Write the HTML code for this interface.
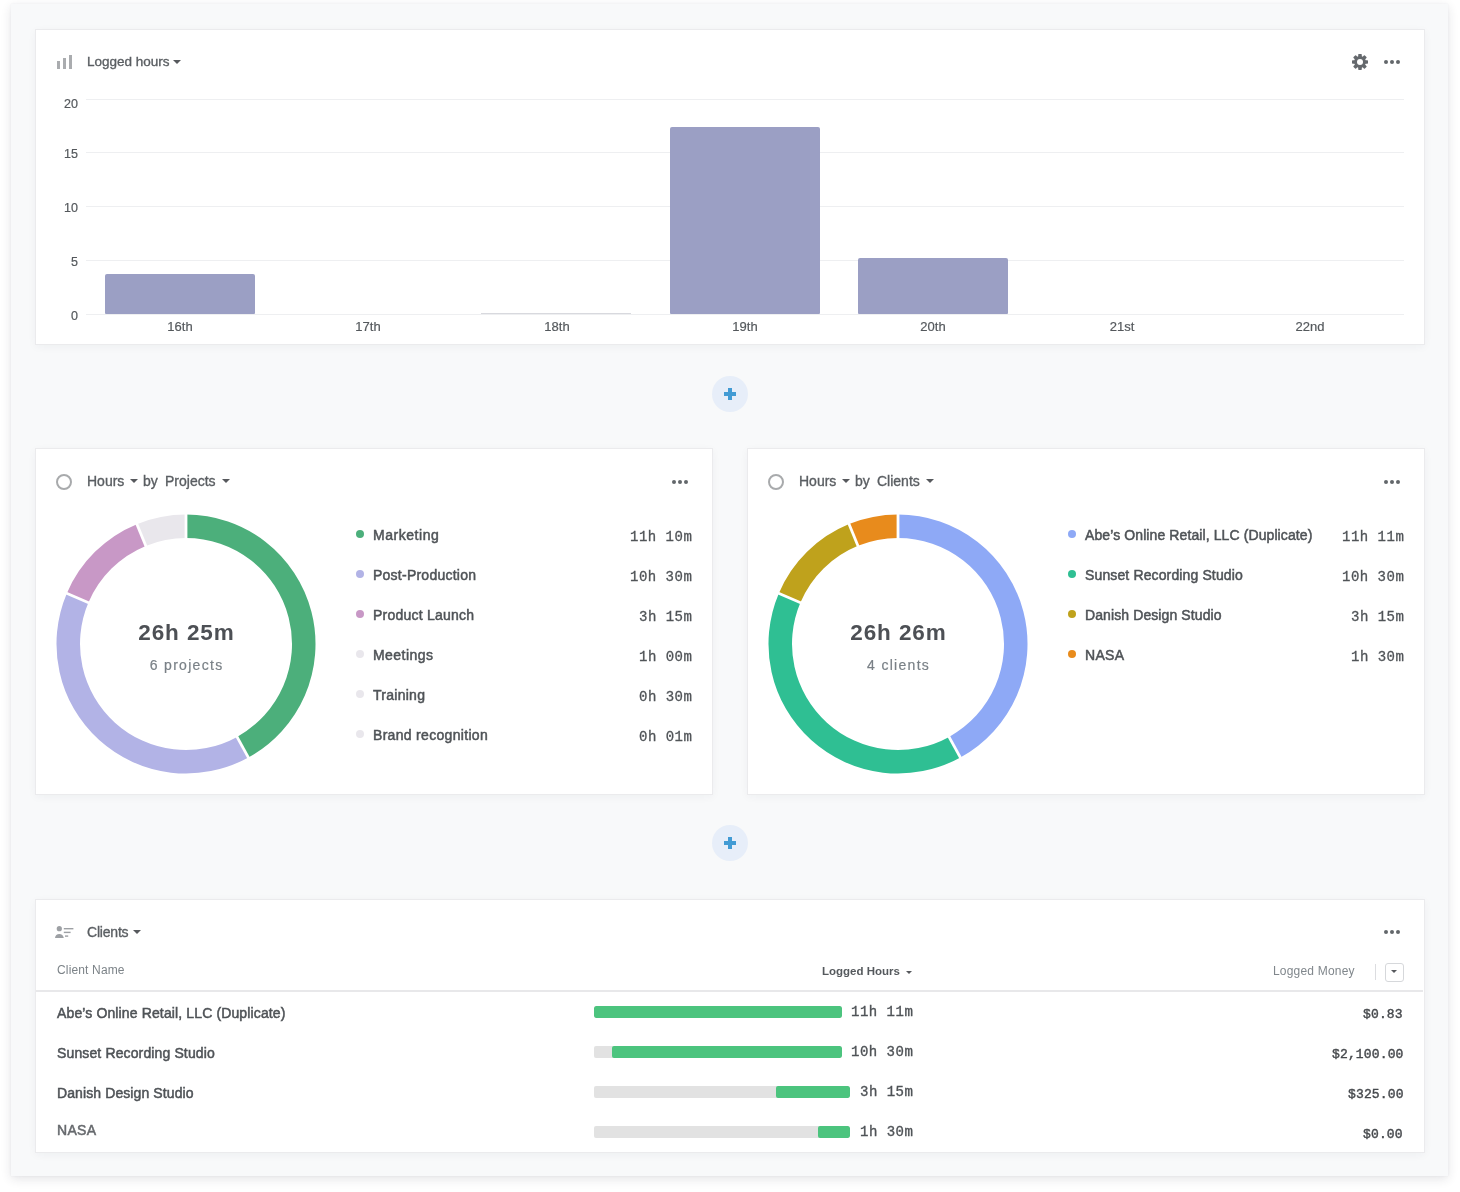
<!DOCTYPE html>
<html><head><meta charset="utf-8"><style>
*{box-sizing:border-box;margin:0;padding:0}
html,body{width:1460px;height:1192px;overflow:hidden;background:#fff;-webkit-font-smoothing:antialiased;font-family:"Liberation Sans",sans-serif;color:#55595d}
.outer{position:absolute;left:11px;top:4px;width:1437px;height:1172px;background:#f8f9fa;box-shadow:0 3px 10px rgba(40,40,60,0.12),0 0 2px rgba(40,44,60,0.06)}
.panel{position:absolute;background:#fff;border:1px solid #ebebed;box-shadow:0 2px 8px rgba(30,40,60,0.045)}
.abs{position:absolute}
.title,.lg,.val,.tname,.tval,.money,.th,.xlab,.ylab,.center1,.center2{will-change:transform}
.title{position:absolute;font-size:14px;line-height:16px;color:#5a5e62;white-space:nowrap;-webkit-text-stroke:0.35px #5a5e62}
.caret{position:absolute;width:0;height:0;border-left:4px solid transparent;border-right:4px solid transparent;border-top:4.5px solid #56595d}
.dots{position:absolute;width:16px;height:4px}
.dots i{position:absolute;top:0;width:4.2px;height:4.2px;border-radius:50%;background:#63676b}
.dots i:nth-child(1){left:0} .dots i:nth-child(2){left:6px} .dots i:nth-child(3){left:12px}
.grid{position:absolute;left:86px;width:1318px;height:1px;background:#eeeff1}
.ylab{position:absolute;left:40px;width:38px;text-align:right;font-size:12.5px;line-height:16px;color:#55595d;-webkit-text-stroke:0.2px #55595d}
.bar{position:absolute;background:#9b9fc4;border-radius:2px 2px 1px 1px}
.xlab{position:absolute;top:319px;width:200px;text-align:center;font-size:13px;line-height:16px;color:#55595d;-webkit-text-stroke:0.2px #55595d}
.xlab{width:200px;margin-left:0}
.dot{position:absolute;width:8px;height:8px;border-radius:50%}
.lg{position:absolute;font-size:14px;line-height:18px;color:#4f5357;white-space:nowrap;letter-spacing:0.3px;-webkit-text-stroke:0.5px #4f5357}
.val{position:absolute;font-family:"Liberation Mono",monospace;font-size:14px;line-height:18px;letter-spacing:0.5px;margin-right:0px;color:#505458;white-space:pre;-webkit-text-stroke:0.3px #505458}
.center1{position:absolute;width:200px;text-align:center;font-weight:bold;font-size:22.5px;line-height:26px;color:#4d5055;letter-spacing:0.9px;text-indent:0.9px}
.center2{position:absolute;width:200px;text-align:center;font-size:14px;line-height:18px;color:#7a8187;-webkit-text-stroke:0.2px #7a8187;letter-spacing:1.3px;text-indent:1.3px}
.plus{position:absolute;width:36px;height:36px;border-radius:50%;background:#e7eef9}
.plus:before{content:"";position:absolute;left:12px;top:16.25px;width:12px;height:3.5px;background:#429bd4}
.plus:after{content:"";position:absolute;left:16.25px;top:12px;width:3.5px;height:12px;background:#429bd4}
.th{position:absolute;top:964px;font-size:12px;line-height:14px;color:#7b8085;white-space:nowrap}
.tname{position:absolute;left:57px;font-size:14px;line-height:18px;color:#4f5357;white-space:nowrap;letter-spacing:0.15px;-webkit-text-stroke:0.5px #4f5357}
.tbar{position:absolute;left:594px;height:12px;background:#e2e2e2;border-radius:2px;overflow:hidden}
.tfill{position:absolute;right:0;top:0;height:12px;background:#4cc47e;border-radius:2px}
.tval{position:absolute;right:547px;font-family:"Liberation Mono",monospace;font-size:14px;line-height:18px;letter-spacing:0.5px;color:#4f5357;white-space:pre;-webkit-text-stroke:0.35px #4f5357}
.money{position:absolute;right:56.8px;font-family:"Liberation Mono",monospace;font-size:13px;line-height:16px;color:#45484c;white-space:pre;letter-spacing:0.15px;-webkit-text-stroke:0.4px #45484c}
</style></head><body>
<div class="outer"></div>

<!-- Panel 1: bar chart -->
<div class="panel" style="left:35px;top:29px;width:1390px;height:316px"></div>
<div class="abs" style="left:57px;top:61px;width:2.5px;height:7.5px;background:#aaacaf"></div>
<div class="abs" style="left:63px;top:58px;width:2.5px;height:10.5px;background:#aaacaf"></div>
<div class="abs" style="left:69px;top:55px;width:2.5px;height:13.5px;background:#aaacaf"></div>
<div class="title" style="left:87px;top:54px;font-size:13.5px">Logged hours</div>
<div class="caret" style="left:173px;top:60px"></div>
<svg class="abs" style="left:1350px;top:52px" width="20" height="20" viewBox="0 0 20 20">
<g fill="#65696d" transform="translate(10 10)">
<circle r="5.9"/>
<rect x="-1.8" y="-8" width="3.6" height="16" rx="0.7"/>
<rect x="-1.8" y="-8" width="3.6" height="16" rx="0.7" transform="rotate(45)"/>
<rect x="-1.8" y="-8" width="3.6" height="16" rx="0.7" transform="rotate(90)"/>
<rect x="-1.8" y="-8" width="3.6" height="16" rx="0.7" transform="rotate(135)"/>
</g><circle cx="10" cy="10" r="3" fill="#fff"/></svg>
<div class="dots" style="left:1383.8px;top:59.9px"><i></i><i></i><i></i></div>
<div class="grid" style="top:99px"></div><div class="grid" style="top:152px"></div><div class="grid" style="top:206px"></div><div class="grid" style="top:260px"></div><div class="grid" style="top:314px"></div><div class="ylab" style="top:95.5px">20</div><div class="ylab" style="top:146px">15</div><div class="ylab" style="top:199.7px">10</div><div class="ylab" style="top:253.60000000000002px">5</div><div class="ylab" style="top:307.5px">0</div><div class="bar" style="left:105px;top:273.9px;width:150px;height:40.1px"></div><div class="xlab" style="left:80px">16th</div><div class="xlab" style="left:268.3px">17th</div><div class="xlab" style="left:456.7px">18th</div><div class="bar" style="left:670px;top:126.8px;width:150px;height:187.2px"></div><div class="xlab" style="left:645px">19th</div><div class="bar" style="left:858.3px;top:257.5px;width:150px;height:56.5px"></div><div class="xlab" style="left:833.3px">20th</div><div class="xlab" style="left:1021.7px">21st</div><div class="xlab" style="left:1210px">22nd</div>
<div class="abs" style="left:481px;top:312.5px;width:150px;height:1px;background:#d8d9de"></div>

<div class="plus" style="left:712px;top:376px"></div>

<!-- Panel 2: projects -->
<div class="panel" style="left:35px;top:448px;width:678px;height:347px"></div>
<div class="abs" style="left:56px;top:473.8px;width:16px;height:16px;border:2px solid #a8aaac;border-radius:50%"></div>
<div class="title" style="left:87px;top:473px">Hours</div><div class="caret" style="left:130px;top:479px"></div>
<div class="title" style="left:143px;top:473px">by</div>
<div class="title" style="left:165px;top:473px">Projects</div><div class="caret" style="left:222px;top:479px"></div>
<div class="dots" style="left:671.9px;top:479.7px"><i></i><i></i><i></i></div>
<svg class="abs" style="left:56.4px;top:513.5px" width="260" height="260"><path d="M130.00 0.50A129.5 129.5 0 0 1 192.39 243.48L181.07 222.89A106 106 0 0 0 130.00 24.00Z" fill="#4caf7b"/>
<path d="M192.39 243.48A129.5 129.5 0 0 1 10.79 79.40L32.43 88.58A106 106 0 0 0 181.07 222.89Z" fill="#b2b3e6"/>
<path d="M10.79 79.40A129.5 129.5 0 0 1 80.86 10.19L89.78 31.93A106 106 0 0 0 32.43 88.58Z" fill="#c898c6"/>
<path d="M80.86 10.19A129.5 129.5 0 0 1 130.00 0.50L130.00 24.00A106 106 0 0 0 89.78 31.93Z" fill="#e9e7ec"/>
<line x1="130.00" y1="-1.00" x2="130.00" y2="25.50" stroke="#fff" stroke-width="2.8"/>
<line x1="193.11" y1="244.80" x2="180.34" y2="221.57" stroke="#fff" stroke-width="2.8"/>
<line x1="9.41" y1="78.81" x2="33.81" y2="89.17" stroke="#fff" stroke-width="2.8"/>
<line x1="80.29" y1="8.80" x2="90.35" y2="33.32" stroke="#fff" stroke-width="2.8"/></svg>
<div class="center1" style="left:86.4px;top:620px">26h 25m</div>
<div class="center2" style="left:86.4px;top:656px">6 projects</div>
<div class="dot" style="left:356px;top:530px;background:#4caf7b"></div>
<div class="lg" style="left:373px;top:526px;letter-spacing:0.54px">Marketing</div>
<div class="val" style="right:768px;top:527.5px">11h 10m</div>
<div class="dot" style="left:356px;top:570px;background:#b2b3e6"></div>
<div class="lg" style="left:373px;top:566px;letter-spacing:0.24px">Post-Production</div>
<div class="val" style="right:768px;top:567.5px">10h 30m</div>
<div class="dot" style="left:356px;top:610px;background:#c898c6"></div>
<div class="lg" style="left:373px;top:606px;letter-spacing:0.22px">Product Launch</div>
<div class="val" style="right:768px;top:607.5px">3h 15m</div>
<div class="dot" style="left:356px;top:650px;background:#e9e7ec"></div>
<div class="lg" style="left:373px;top:646px;letter-spacing:0.46px">Meetings</div>
<div class="val" style="right:768px;top:647.5px">1h 00m</div>
<div class="dot" style="left:356px;top:690px;background:#e9e7ec"></div>
<div class="lg" style="left:373px;top:686px;letter-spacing:0.27px">Training</div>
<div class="val" style="right:768px;top:687.5px">0h 30m</div>
<div class="dot" style="left:356px;top:730px;background:#e9e7ec"></div>
<div class="lg" style="left:373px;top:726px;letter-spacing:0.31px">Brand recognition</div>
<div class="val" style="right:768px;top:727.5px">0h 01m</div>

<!-- Panel 3: clients donut -->
<div class="panel" style="left:747px;top:448px;width:678px;height:347px"></div>
<div class="abs" style="left:768px;top:473.8px;width:16px;height:16px;border:2px solid #a8aaac;border-radius:50%"></div>
<div class="title" style="left:799px;top:473px">Hours</div><div class="caret" style="left:842px;top:479px"></div>
<div class="title" style="left:855px;top:473px">by</div>
<div class="title" style="left:877px;top:473px">Clients</div><div class="caret" style="left:926px;top:479px"></div>
<div class="dots" style="left:1383.9px;top:479.7px"><i></i><i></i><i></i></div>
<svg class="abs" style="left:768.4px;top:513.5px" width="260" height="260"><path d="M130.00 0.50A129.5 129.5 0 0 1 192.39 243.48L181.07 222.89A106 106 0 0 0 130.00 24.00Z" fill="#8ea9f6"/>
<path d="M192.39 243.48A129.5 129.5 0 0 1 10.79 79.40L32.43 88.58A106 106 0 0 0 181.07 222.89Z" fill="#2fbf93"/>
<path d="M10.79 79.40A129.5 129.5 0 0 1 81.07 10.10L89.95 31.86A106 106 0 0 0 32.43 88.58Z" fill="#bfa21c"/>
<path d="M81.07 10.10A129.5 129.5 0 0 1 130.00 0.50L130.00 24.00A106 106 0 0 0 89.95 31.86Z" fill="#e88b1c"/>
<line x1="130.00" y1="-1.00" x2="130.00" y2="25.50" stroke="#fff" stroke-width="2.8"/>
<line x1="193.11" y1="244.80" x2="180.34" y2="221.57" stroke="#fff" stroke-width="2.8"/>
<line x1="9.41" y1="78.81" x2="33.81" y2="89.17" stroke="#fff" stroke-width="2.8"/>
<line x1="80.50" y1="8.71" x2="90.52" y2="33.25" stroke="#fff" stroke-width="2.8"/></svg>
<div class="center1" style="left:798.4px;top:620px">26h 26m</div>
<div class="center2" style="left:798.4px;top:656px">4 clients</div>
<div class="dot" style="left:1068px;top:530px;background:#8ea9f6"></div>
<div class="lg" style="left:1085px;top:526px;letter-spacing:0.1px">Abe&#8217;s Online Retail, LLC (Duplicate)</div>
<div class="val" style="right:56px;top:527.5px">11h 11m</div>
<div class="dot" style="left:1068px;top:570px;background:#2fbf93"></div>
<div class="lg" style="left:1085px;top:566px;letter-spacing:0.13px">Sunset Recording Studio</div>
<div class="val" style="right:56px;top:567.5px">10h 30m</div>
<div class="dot" style="left:1068px;top:610px;background:#bfa21c"></div>
<div class="lg" style="left:1085px;top:606px;letter-spacing:0.1px">Danish Design Studio</div>
<div class="val" style="right:56px;top:607.5px">3h 15m</div>
<div class="dot" style="left:1068px;top:650px;background:#e88b1c"></div>
<div class="lg" style="left:1085px;top:646px;letter-spacing:0.3px">NASA</div>
<div class="val" style="right:56px;top:647.5px">1h 30m</div>

<div class="plus" style="left:712px;top:825px"></div>

<!-- Panel 4: clients table -->
<div class="panel" style="left:35px;top:899px;width:1390px;height:254px"></div>
<svg class="abs" style="left:54px;top:924px" width="22" height="16" viewBox="0 0 22 16">
<circle cx="5.3" cy="4.7" r="2.6" fill="#9da0a4"/>
<path d="M1 14 Q1.5 10 5.3 10 Q9 10 9.8 14 Z" fill="#9da0a4"/>
<rect x="9.8" y="4" width="9.6" height="1.4" fill="#9da0a4"/>
<rect x="9.8" y="7.7" width="6.8" height="1.4" fill="#9da0a4"/>
<rect x="11" y="11.4" width="3.2" height="1.4" fill="#9da0a4"/>
</svg>
<div class="title" style="left:87px;top:924px;letter-spacing:-0.2px">Clients</div><div class="caret" style="left:133px;top:930px"></div>
<div class="dots" style="left:1383.8px;top:929.7px"><i></i><i></i><i></i></div>
<div class="th" style="left:57px;top:963px;letter-spacing:0.15px;color:#7c8388">Client Name</div>
<div class="th" style="left:822px;top:963.5px;font-weight:bold;color:#55595d;font-size:11.5px">Logged Hours</div>
<div class="caret" style="left:906px;top:970.5px;border-left-width:3px;border-right-width:3px;border-top-width:3.5px"></div>
<div class="th" style="left:1273px;top:964px;color:#80878c;letter-spacing:0.2px">Logged Money</div>
<div class="abs" style="left:1375px;top:964px;width:1px;height:16px;background:#dcdde0"></div>
<div class="abs" style="left:1384.5px;top:962.5px;width:19px;height:19px;border:1px solid #d6d8db;border-radius:3px"></div>
<div class="caret" style="left:1390.5px;top:970px;border-left-width:3px;border-right-width:3px;border-top-width:3.5px"></div>
<div class="abs" style="left:36px;top:990px;width:1387px;height:2px;background:#e8e8ea"></div>
<div class="tname" style="top:1004px;letter-spacing:0.13px">Abe&#8217;s Online Retail, LLC (Duplicate)</div><div class="tbar" style="top:1006px;width:248px"><div class="tfill" style="width:248px"></div></div><div class="tval" style="top:1003px">11h 11m</div><div class="money" style="top:1006.5px">$0.83</div><div class="tname" style="top:1044px;letter-spacing:0.13px">Sunset Recording Studio</div><div class="tbar" style="top:1046px;width:248px"><div class="tfill" style="width:230px"></div></div><div class="tval" style="top:1043px">10h 30m</div><div class="money" style="top:1046.5px">$2,100.00</div><div class="tname" style="top:1084px;letter-spacing:0.1px">Danish Design Studio</div><div class="tbar" style="top:1086px;width:256px"><div class="tfill" style="width:74px"></div></div><div class="tval" style="top:1083px">3h 15m</div><div class="money" style="top:1086.5px">$325.00</div><div class="tname" style="top:1120.5px;letter-spacing:0.3px;color:#66696d;-webkit-text-stroke-color:#66696d">NASA</div><div class="tbar" style="top:1126px;width:256px"><div class="tfill" style="width:32px"></div></div><div class="tval" style="top:1123px">1h 30m</div><div class="money" style="top:1126.5px">$0.00</div>
</body></html>
